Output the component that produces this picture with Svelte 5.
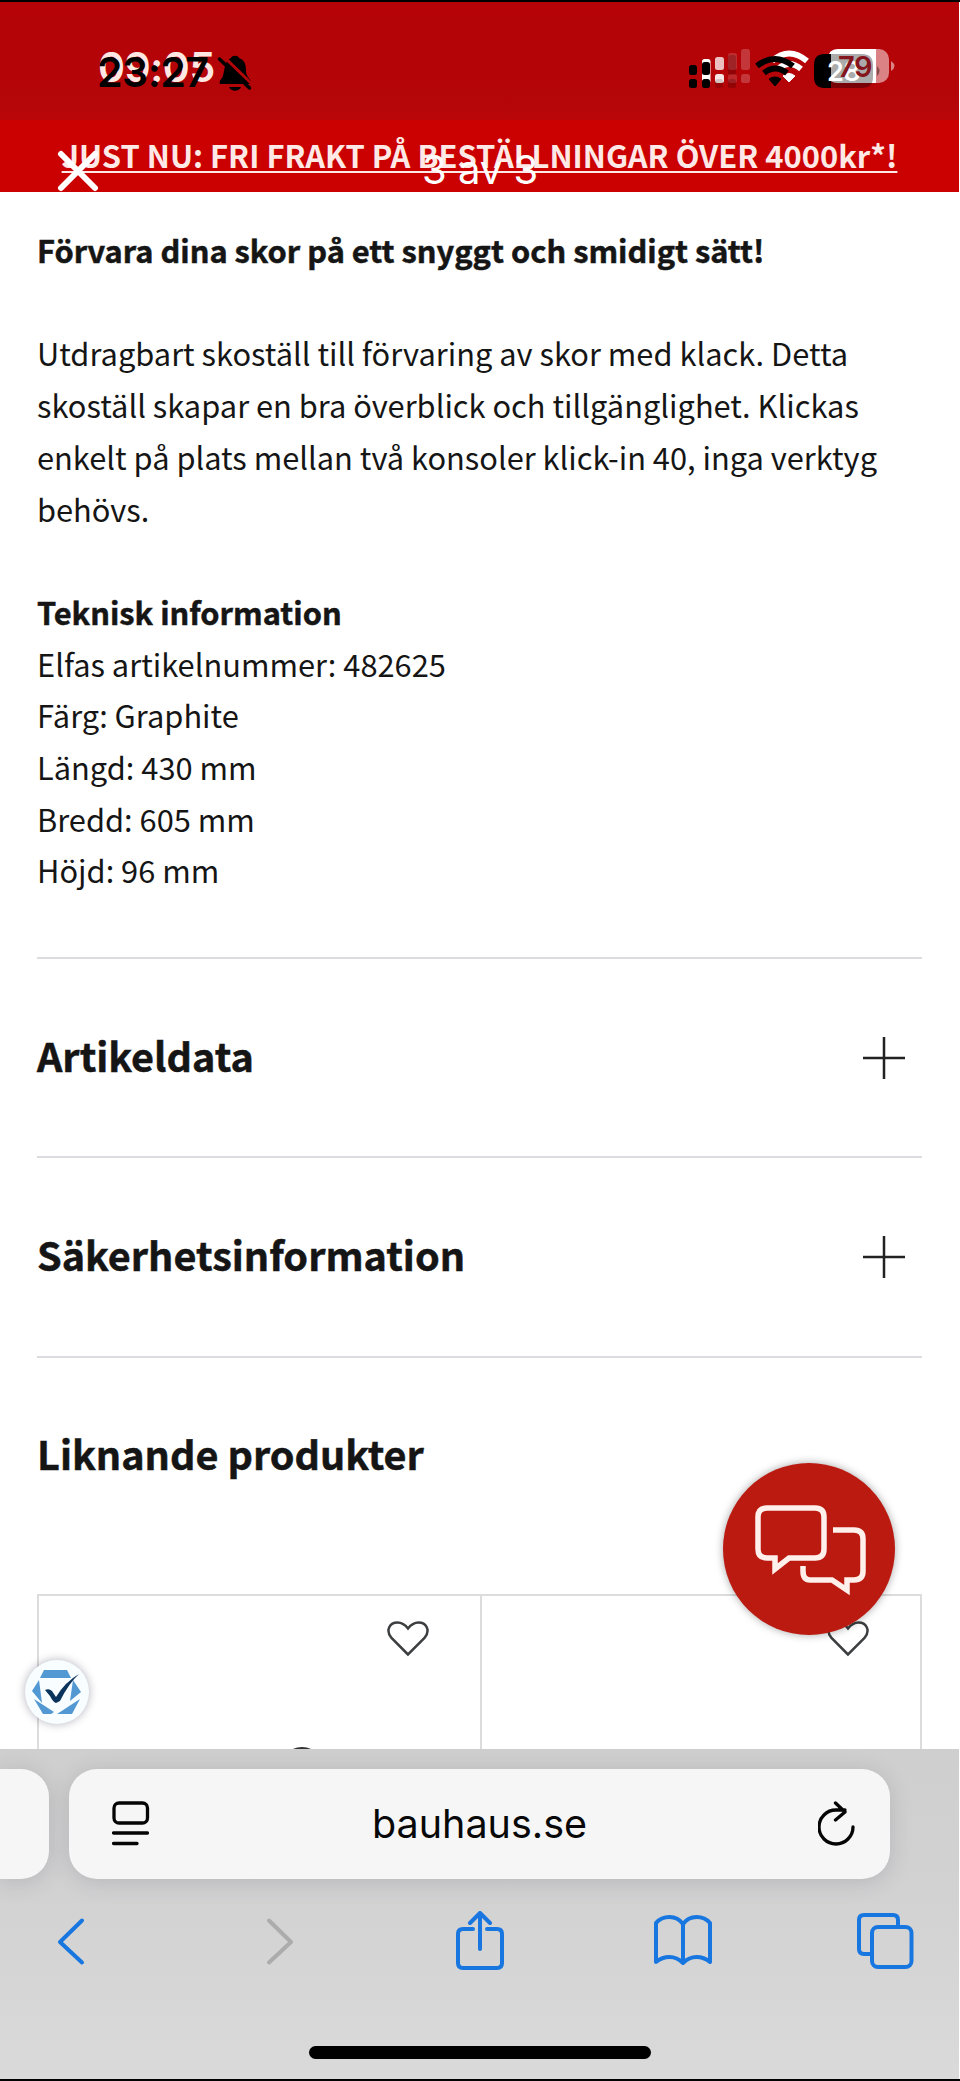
<script>
    const specs = [
        "Elfas artikelnummer: 482625",
        "Färg: Graphite",
        "Längd: 430 mm",
        "Bredd: 605 mm",
        "Höjd: 96 mm",
    ];
    const sections = ["Artikeldata", "Säkerhetsinformation"];
    const products = [1, 2];
</script>

<div class="screen">
    <header>
        <div class="status">
            <span class="time time-under">09:05</span>
            <span class="time time-over">23:27</span>
            <svg class="bell" viewBox="0 0 36 38" width="36" height="38">
                <path d="M9 9C11 6 12 5 14 4C15 1 21 1 22 4C28 6 29 11 29 17C29 21 31 23 34 27V30H3C2 28 3 26 5 24C7 21 7 14 9 9Z" />
                <path d="M12 33H24C22 38 14 38 12 33Z" />
                <path class="cut" d="M5 1L36 31" />
                <path class="slash" d="M2.500 5L32.500 34" />
            </svg>
            <svg class="indicators" viewBox="680 40 230 60" width="230" height="60">
                <g fill="#fff">
                    <rect x="702" y="59" width="8.500" height="24" rx="2.500" />
                    <rect x="715" y="57" width="9" height="13" rx="2.500" opacity=".75" />
                    <rect x="715" y="74" width="9" height="9" rx="2.500" opacity=".9" />
                    <rect x="728" y="53" width="9" height="17" rx="2.500" opacity=".16" />
                    <rect x="728" y="74" width="9" height="9" rx="2.500" opacity=".14" />
                    <rect x="741" y="49" width="9" height="21" rx="2.500" opacity=".2" />
                    <rect x="741" y="74" width="9" height="9" rx="2.500" opacity=".2" />
                </g>
                <g fill="#000">
                    <rect x="689" y="65" width="8" height="10" rx="2.500" />
                    <rect x="689" y="79" width="8" height="9" rx="2.500" />
                    <rect x="702" y="62" width="8" height="13" rx="2.500" />
                    <rect x="702" y="79" width="8" height="9" rx="2.500" />
                    <rect x="715" y="79" width="8" height="9" rx="2.500" opacity=".15" />
                    <rect x="728" y="55" width="8" height="20" rx="2.500" opacity=".18" />
                    <rect x="728" y="79" width="8" height="9" rx="2.500" opacity=".18" />
                </g>
                <g class="wave" stroke="#fff">
                    <path d="M772 61Q789 46 807 61M778 69Q789 59 801 69" />
                    <path class="dot" fill="#fff" d="M783 76Q789 71 795 76L789 82Z" />
                </g>
                <g class="wave" stroke="#000">
                    <path d="M757 66Q775 52 793 66M764 73Q775 64 787 73" />
                    <path class="dot" fill="#000" d="M769 79Q775 75 781 79L775 86Z" />
                </g>
                <rect x="828" y="49" width="61" height="34" rx="10" fill="#fff" opacity=".5" />
                <path d="M876 49H838Q828 49 828 59V73Q828 83 838 83H876Z" fill="#fff" />
                <path d="M891 61Q898 66 891 71Z" fill="#fff" opacity=".5" />
                <path d="M831 54H862Q873 54 873 65V77Q873 88 862 88H831Z" opacity=".33" />
                <path d="M831 54H824.500Q814 54 814 65V77Q814 88 824.500 88H831Z" />
                <path d="M877 66Q882 71 877 76Z" opacity=".4" />
                <text class="pct pct-over" x="827" y="80.500" fill="#fff">28</text>
                <text class="pct" x="838" y="77" fill="#85151d">79</text>
            </svg>
        </div>
        <div class="promo">
            <a href="#frakt">JUST NU: FRI FRAKT PÅ BESTÄLLNINGAR ÖVER 4000kr*!</a>
            <svg class="close" viewBox="0 0 42 42" width="42" height="42"><path d="M4 4L38 38M38 4L4 38" /></svg>
            <span class="counter">3 av 3</span>
        </div>
    </header>

    <main>
        <section class="description">
            <p><strong>Förvara dina skor på ett snyggt och smidigt sätt!</strong></p>
            <p class="intro">
                Utdragbart skoställ till förvaring av skor med klack. Detta<br />
                skoställ skapar en bra överblick och tillgänglighet. Klickas<br />
                enkelt på plats mellan två konsoler klick-in 40, inga verktyg<br />
                behövs.
            </p>
            <p><strong>Teknisk information</strong></p>
            {#each specs as spec}
                <p>{spec}</p>
            {/each}
        </section>

        {#each sections as title}
            <section class="row">
                <h2>{title}</h2>
                <svg viewBox="0 0 42 42" width="42" height="42"><path d="M21 0V42M0 21H42" /></svg>
            </section>
        {/each}
        <section class="row similar"><h2>Liknande produkter</h2></section>

        <div class="products">
            {#each products as id (id)}
                <div class="product">
                    <svg viewBox="0 0 42 36" width="42" height="36"><path d="M21 33.500L4.500 17C-2 9 3 1.500 10.500 1.500C15 1.500 18 3.500 21 7.500C24 3.500 27 1.500 31.500 1.500C39 1.500 44 9 37.500 17Z" /></svg>
                </div>
            {/each}
            <span class="thumb"></span>
        </div>
    </main>

    <button class="chat" aria-label="Chatt">
        <svg viewBox="0 0 172 172" width="172" height="172">
            <path d="M44 45H92Q101 45 101 54V86Q101 95 92 95H66L52 106V95H44Q35 95 35 86V54Q35 45 44 45Z" />
            <path d="M110 67H131Q140 67 140 76V108Q140 117 131 117H124V127L109 117H87Q80 117 80 108V103" />
        </svg>
    </button>
    <div class="trust">
        <svg viewBox="0 0 64 64" width="64" height="64">
            <path fill="#5298d2" d="M19 10H42L46 18H15ZM14 20L17 43L7 31ZM48 20L56 32L45 41ZM9 39L29 52L26 54H18ZM55 39L47 54H32Z" />
            <path fill="#0b345c" d="M20 30Q24 28 27 31L31 37Q40 22 54 14Q44 23 35 41L31 43Q28 42 25 36Z" />
        </svg>
    </div>

    <footer>
        <div class="tabs">
            <div class="prev-tab"></div>
            <div class="address">
                <svg class="reader" viewBox="0 0 38 46" width="38" height="46">
                    <rect x="2" y="2" width="33.500" height="20" rx="5" />
                    <path d="M1.500 32H35.500M1.500 42.500H25" />
                </svg>
                <span>bauhaus.se</span>
                <svg class="reload" viewBox="0 0 38 46" width="38" height="46">
                    <path d="M35 26A17 17 0 1 1 18 9H27M17.500 2L27 11L17.500 19" />
                </svg>
            </div>
        </div>
        <nav>
            <svg viewBox="0 0 28 60" width="28" height="60"><path d="M25 9.500L3 31L25 51.500" /></svg>
            <svg class="off" viewBox="0 0 28 60" width="28" height="60"><path d="M3 9.500L25 31L3 51.500" /></svg>
            <svg viewBox="0 0 48 60" width="48" height="60"><path d="M17 18H7Q2 18 2 23V52Q2 57 7 57H41Q46 57 46 52V23Q46 18 41 18H31M24 38V2M14 12L24 2L34 12" /></svg>
            <svg viewBox="0 0 60 60" width="60" height="60"><path d="M30 13Q25 6 16.500 6Q8 6 3 12V51Q9 46 16.500 46Q24 46 30 52Q36 46 43.500 46Q51 46 57 51V12Q52 6 43.500 6Q35 6 30 13ZV52" /></svg>
            <svg viewBox="0 0 58 60" width="58" height="60"><path d="M14 43H8Q3 43 3 38V9Q3 4 8 4H37Q42 4 42 9V15" /><rect x="16" y="16" width="39.500" height="40" rx="6" /></svg>
        </nav>
        <div class="home"></div>
    </footer>
</div>

<style>
    :global(body) { background: #fff; }
    .screen {
        position: relative;
        display: flex;
        flex-direction: column;
        width: 960px;
        height: 2081px;
        box-sizing: border-box;
        overflow: hidden;
        border-top: 2px solid #000;
        border-bottom: 2px solid #000;
        color: #151515;
        font-family: "Noto Sans CJK SC", sans-serif;
    }
    svg { display: block; fill: none; }
    p, h2 { margin: 0; }
    strong, h2 { -webkit-text-stroke: 0.5px currentColor; }
    header { width: 959px; }
    .status {
        position: relative;
        height: 118px;
        background: linear-gradient(#b50307, #b40509 80%, #b90709);
    }
    .time {
        position: absolute;
        font: 600 41px/50px Inter, sans-serif;
        letter-spacing: -0.5px;
    }
    .time-under { left: 98px; top: 40px; color: #ffe8e4; }
    .time-over { left: 97px; top: 45px; color: #000; }
    .bell { position: absolute; left: 217px; top: 52px; fill: #000; }
    .cut { stroke: #b40509; stroke-width: 3; }
    .slash { stroke: #000; stroke-width: 3.5; stroke-linecap: round; }
    .indicators { position: absolute; left: 680px; top: 38px; fill: #000; }
    .wave { fill: none; stroke-width: 6; }
    .dot { stroke-width: 1; }
    .pct { font: 600 29px Inter, sans-serif; letter-spacing: -0.5px; }
    .pct-over { font-size: 27px; }
    .promo {
        position: relative;
        display: flex;
        justify-content: center;
        height: 72px;
        background: #cb0000;
    }
    .promo a {
        color: #ffe9e6;
        font-size: 30.9px;
        font-weight: 700;
        line-height: 69px;
        white-space: nowrap;
        text-decoration: underline;
        text-decoration-thickness: 2px;
        text-underline-offset: 3px;
        text-decoration-skip-ink: none;
    }
    .close { position: absolute; left: 57px; top: 30px; stroke: #fff; stroke-width: 6; stroke-linecap: round; }
    .counter {
        position: absolute;
        left: 422px;
        top: 25px;
        color: #fff;
        font: 400 40px/50px Inter, sans-serif;
    }
    main { padding: 0 38px 0 37px; height: 1557px; overflow: hidden; }
    .description {
        height: 733px;
        padding-top: 32px;
        font-size: 30.8px;
        line-height: 51.7px;
        white-space: nowrap;
    }
    .intro { margin: 51.7px 0; }
    .row {
        display: flex;
        align-items: center;
        justify-content: space-between;
        height: 199.3px;
        box-sizing: border-box;
        border-top: 2px solid #dcdce0;
        padding-right: 17px;
    }
    .row h2 { padding-bottom: 6px; font-size: 39.6px; font-weight: 700; line-height: 60px; }
    .row svg { stroke: #222; stroke-width: 2.5; }
    .similar { height: 238.4px; padding-bottom: 39px; }
    .products {
        position: relative;
        display: grid;
        grid-template-columns: 1fr 1fr;
        height: 170px;
        border: 2px solid #dcdcdc;
    }
    .product { display: flex; justify-content: flex-end; padding: 25px 51px 0 0; }
    .product + .product { border-left: 2px solid #dcdcdc; }
    .product svg { stroke: #3c3f40; stroke-width: 2.5; }
    .thumb {
        position: absolute;
        left: 251px;
        top: 151px;
        width: 24px;
        height: 12px;
        border-radius: 50%;
        background: #333;
    }
    .chat {
        position: absolute;
        left: 723px;
        top: 1461px;
        width: 172px;
        height: 172px;
        padding: 0;
        border: 0;
        border-radius: 50%;
        background: #bb1a11;
        box-shadow: 0 0 8px rgba(0, 0, 0, 0.35);
    }
    .chat svg { stroke: #fff0ec; stroke-width: 5.5; }
    .trust {
        position: absolute;
        left: 25px;
        top: 1658px;
        width: 64px;
        height: 64px;
        border-radius: 50%;
        background: #f8fdff;
        box-shadow: 0 0 10px rgba(0, 0, 40, 0.3);
    }
    footer {
        position: relative;
        width: 959px;
        height: 330px;
        background: linear-gradient(#cfcfcf, #d2d2d3 45%, #dadada);
    }
    .tabs { display: flex; gap: 20px; padding-top: 20px; }
    .prev-tab, .address { height: 110px; background: #f6f6f6; box-shadow: 0 3px 22px rgba(60, 60, 70, 0.18); }
    .prev-tab { width: 49px; border-radius: 0 28px 28px 0; }
    .address {
        display: flex;
        align-items: center;
        justify-content: space-between;
        width: 821px;
        box-sizing: border-box;
        padding: 0 34px 0 43px;
        border-radius: 28px;
        color: #080808;
        font: 400 39.5px/50px Inter, sans-serif;
    }
    .address span { padding-right: 9px; }
    .reader, .reload { stroke: #050505; stroke-width: 3.3; stroke-linecap: round; stroke-linejoin: round; }
    nav {
        display: grid;
        grid-template-columns: 209px 200px 203px 202px 60px;
        padding: 32px 0 0 41px;
        justify-items: center;
    }
    nav svg { margin-left: calc(60px - 100%); stroke: #1776df; stroke-width: 4; stroke-linecap: round; stroke-linejoin: round; }
    nav .off { stroke: #acacac; }
    .home {
        position: absolute;
        left: 309px;
        bottom: 20px;
        width: 342px;
        height: 13px;
        border-radius: 7px;
        background: #000;
    }
</style>
